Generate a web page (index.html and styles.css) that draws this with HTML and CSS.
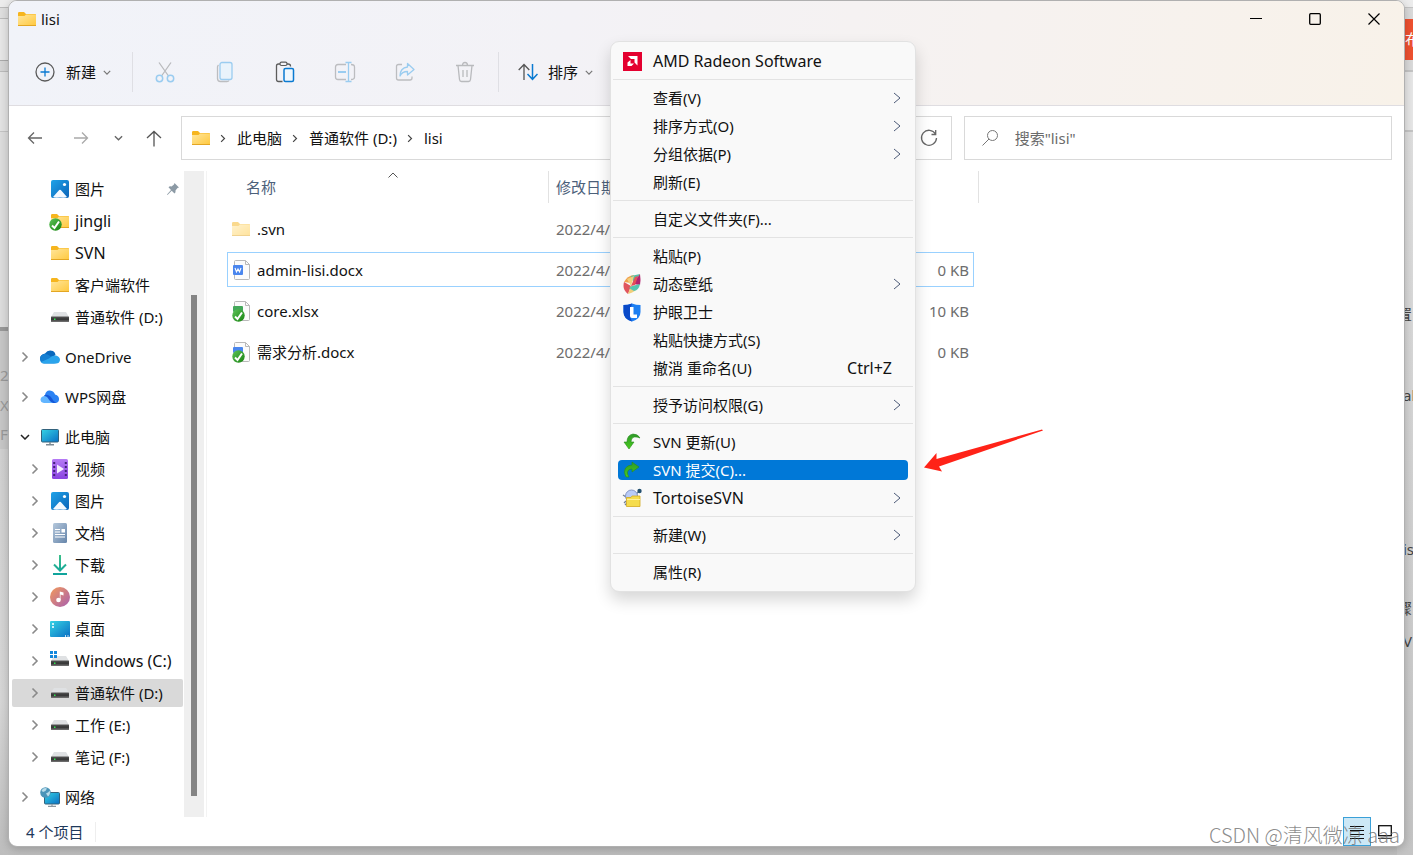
FILE: index.html
```html
<!DOCTYPE html>
<html lang="zh-CN">
<head>
<meta charset="utf-8">
<title>lisi</title>
<link rel="stylesheet" href="styles.css">
</head>
<body class="desktop">
<svg class="defs" width="0" height="0" aria-hidden="true">
  <defs>
    <linearGradient id="gFolder" x1="0" y1="0" x2="1" y2="1"><stop offset="0" stop-color="#ffe69c"/><stop offset="1" stop-color="#ffc83d"/></linearGradient>
    <linearGradient id="gBlue" x1="0" y1="0" x2="1" y2="1"><stop offset="0" stop-color="#1fa3e8"/><stop offset="1" stop-color="#0b63b8"/></linearGradient>
    <linearGradient id="gScreen" x1="0" y1="0" x2="1" y2="1"><stop offset="0" stop-color="#35d3e4"/><stop offset="1" stop-color="#0a6fc4"/></linearGradient>
    <linearGradient id="gVideo" x1="0" y1="0" x2="0" y2="1"><stop offset="0" stop-color="#b57af5"/><stop offset="1" stop-color="#8a44e0"/></linearGradient>
    <linearGradient id="gDoc" x1="0" y1="0" x2="1" y2="1"><stop offset="0" stop-color="#b5c8dc"/><stop offset="1" stop-color="#6685aa"/></linearGradient>
    <linearGradient id="gDown" x1="0" y1="0" x2="0" y2="1"><stop offset="0" stop-color="#3cc08a"/><stop offset="1" stop-color="#0fa39c"/></linearGradient>
    <linearGradient id="gMusic" x1="0" y1="0" x2="1" y2="1"><stop offset="0" stop-color="#f39a5a"/><stop offset="1" stop-color="#a85fb0"/></linearGradient>
    <linearGradient id="gDrive" x1="0" y1="0" x2="0" y2="1"><stop offset="0" stop-color="#585858"/><stop offset=".5" stop-color="#333"/><stop offset="1" stop-color="#777"/></linearGradient>
    <linearGradient id="gGreen" x1="0" y1="0" x2="1" y2="1"><stop offset="0" stop-color="#5fc35a"/><stop offset="1" stop-color="#16830f"/></linearGradient>
    <linearGradient id="gArrow" x1="0" y1="0" x2="0" y2="1"><stop offset="0" stop-color="#2f9a2a"/><stop offset="1" stop-color="#49cc1c"/></linearGradient>
  </defs>
  <symbol id="folder" viewBox="0 0 18 14"><path d="M0 1.200Q0 0 1.200 0H6L8 2H17Q18 2 18 3V7H0z" fill="#f6b51e"/><path d="M0 4H6.500L8 2.500H17Q18 2.500 18 3.500V13Q18 14 17 14H1Q0 14 0 13z" fill="url(#gFolder)"/><path d="M0 13.500H18" stroke="#e3a623"/></symbol>
  <symbol id="check" viewBox="0 0 13 13"><circle cx="6.500" cy="6.500" r="6.200" fill="url(#gGreen)"/><path d="M3 7.500L5.500 10L10 3.500" fill="none" stroke="#fff" stroke-width="2"/></symbol>
  <symbol id="picture" viewBox="0 0 18 18"><rect width="18" height="18" rx="2" fill="url(#gBlue)"/><path d="M2 17L8.200 10Q9 9.300 9.800 10L16 17Q15 18 9 17.500Q3 18 2 17z" fill="#f4f9ff"/><circle cx="13.500" cy="4.500" r="1.600" fill="#fff"/></symbol>
  <symbol id="drive" viewBox="0 0 18 10"><path d="M3 0H15L18 5H0z" fill="#dfe1e3"/><rect y="4.500" width="18" height="5.500" rx=".5" fill="url(#gDrive)"/><rect x="3" y="6.500" width="1.500" height="1.500" fill="#30e650"/></symbol>
  <symbol id="right" viewBox="0 0 8 12"><path d="M1.500 1.500L6 6L1.500 10.500" fill="none" stroke="currentColor" stroke-width="1.600"/></symbol>
  <symbol id="down" viewBox="0 0 10 6"><path d="M1 1L5 5L9 1" fill="none" stroke="currentColor" stroke-width="1.500"/></symbol>
  <symbol id="more" viewBox="0 0 8 12"><path d="M1 1L7 6L1 11" fill="none" stroke="currentColor" stroke-width="1"/></symbol>
  <symbol id="page" viewBox="0 0 17 20"><path d="M1.500 1.500Q1.500 .5 2.500 .5H12.500L16.500 4.500V18.500Q16.500 19.500 15.500 19.500H2.500Q1.500 19.500 1.500 18.500z" fill="#fbfbfb" stroke="#b9b9b9"/><path d="M12.500 .5V4.500H16.500" fill="none" stroke="#b9b9b9"/></symbol>
</svg>

<div class="behind behind-left" aria-hidden="true"><span class="frag f-2">2</span><span class="frag f-x">X</span><span class="frag f-f">F</span></div>
<div class="behind behind-right" aria-hidden="true"><span class="publish">布</span><span class="frag r-1">置</span><span class="frag r-2">al</span><span class="frag r-3">is</span><span class="frag r-4">骤</span><span class="frag r-5">V</span></div>

<main class="window">
  <header class="chrome">
    <div class="titlebar">
      <svg class="i-folder"><use href="#folder"/></svg>
      <h1 class="title">lisi</h1>
      <div class="caption">
        <button class="cap" aria-label="最小化"><svg width="12" height="12"><path d="M0 5.500H12" stroke="#000"/></svg></button>
        <button class="cap" aria-label="最大化"><svg width="12" height="12"><rect x=".7" y=".7" width="10.600" height="10.600" rx="1" fill="none" stroke="#000" stroke-width="1.300"/></svg></button>
        <button class="cap" aria-label="关闭"><svg width="12" height="12"><path d="M.5 .5L11.500 11.500M11.500 .5L.5 11.500" stroke="#000" stroke-width="1.200"/></svg></button>
      </div>
    </div>
    <div class="toolbar">
      <button class="tool"><svg width="20" height="20"><circle cx="10" cy="10" r="9" fill="none" stroke="#5a5a5a" stroke-width="1.300"/><path d="M5.500 10H14.500M10 5.500V14.500" stroke="#0a7ad1" stroke-width="1.300"/></svg><span class="tool-text">新建</span><svg class="chev" width="8" height="5"><use href="#down"/></svg></button>
      <span class="divider divider-a"></span>
      <button class="tool tool-icon" aria-label="剪切"><svg width="20" height="22"><path d="M4 1.500L13.500 15M16 1.500L6.500 15" stroke="#b9babd" stroke-width="1.300"/><g fill="none" stroke="#9accf0" stroke-width="1.500"><circle cx="4.500" cy="17.500" r="3.200"/><circle cx="15.500" cy="17.500" r="3.200"/></g></svg></button>
      <button class="tool tool-icon" aria-label="复制"><svg width="20" height="22"><path d="M3.500 4Q2.500 5 2.500 6V17.500Q2.500 20.500 5.500 20.500H12Q13.500 20.500 14 19.500" fill="none" stroke="#bcbdc0" stroke-width="1.300"/><rect x="5" y="1.500" width="12" height="17" rx="2" fill="#e9f3fb" stroke="#9accf0" stroke-width="1.300"/></svg></button>
      <button class="tool tool-icon" aria-label="粘贴"><svg width="20" height="22"><path d="M7.500 20.500H3.500Q1.500 20.500 1.500 18.500V5Q1.500 3 3.500 3H13Q15.500 3 15.500 5V5.500" fill="none" stroke="#5c5c5c" stroke-width="1.300"/><rect x="5" y="1.200" width="7" height="3.300" rx="1.500" fill="#f3f2f6" stroke="#5c5c5c" stroke-width="1.200"/><rect x="9" y="7.500" width="9.500" height="13" rx="1.500" fill="#f0f7fd" stroke="#0a7ad1" stroke-width="1.500"/></svg></button>
      <button class="tool tool-icon" aria-label="重命名"><svg width="22" height="22"><path d="M12 3.500H4Q1.500 3.500 1.500 6V16Q1.500 18.500 4 18.500H12M17 3.500Q20.500 3.500 20.500 6V16Q20.500 18.500 17 18.500" fill="none" stroke="#bcbdc0" stroke-width="1.300"/><path d="M4 11H12" stroke="#9accf0" stroke-width="2"/><path d="M14.500 1.500V20.500M11.500 1.500H17.500M11.500 20.500H17.500" stroke="#9accf0" stroke-width="1.300"/></svg></button>
      <button class="tool tool-icon" aria-label="共享"><svg width="20" height="20"><path d="M7 2.500H3.500Q1.500 2.500 1.500 4.500V16Q1.500 18 3.500 18H15Q17 18 17 16V14.500" fill="none" stroke="#bcbdc0" stroke-width="1.300"/><path d="M12.500 1.500L19 7.500L12.500 13V9.500Q7 9.500 5 14Q5 6 12.500 5z" fill="none" stroke="#9accf0" stroke-width="1.300" stroke-linejoin="round"/></svg></button>
      <button class="tool tool-icon" aria-label="删除"><svg width="20" height="22"><path d="M1 4.500H19M3 4.500L4.500 18.500Q4.700 20.500 6.500 20.500H13.500Q15.300 20.500 15.500 18.500L17 4.500M7.500 4.500Q7.500 1.500 10 1.500T12.500 4.500M8 9V16M12 9V16" fill="none" stroke="#b9babd" stroke-width="1.300"/></svg></button>
      <span class="divider divider-b"></span>
      <button class="tool"><svg width="20" height="18"><path d="M6 17V2M.7 7L6 1.500L11.300 7" fill="none" stroke="#555" stroke-width="1.300"/><path d="M14.500 1V16M9.500 11L14.500 16.300L19.500 11" fill="none" stroke="#0a7ad1" stroke-width="1.500"/></svg><span class="tool-text tool-sort">排序</span><svg class="chev" width="8" height="5"><use href="#down"/></svg></button>
    </div>
  </header>

  <div class="addressrow">
    <nav class="navs">
      <button class="nav" aria-label="后退"><svg width="16" height="14"><path d="M15 7H1.500M7 1.500L1.500 7L7 12.500" fill="none" stroke="#666" stroke-width="1.300"/></svg></button>
      <button class="nav" aria-label="前进"><svg width="16" height="14"><path d="M1 7H14.500M9 1.500L14.500 7L9 12.500" fill="none" stroke="#a9a9a9" stroke-width="1.300"/></svg></button>
      <button class="nav nav-small" aria-label="最近位置"><svg width="9" height="6"><use href="#down"/></svg></button>
      <button class="nav nav-up" aria-label="向上"><svg width="16" height="17"><path d="M8 16.500V1.500M1 8L8 1.500L15 8" fill="none" stroke="#555" stroke-width="1.300"/></svg></button>
    </nav>
    <div class="address">
      <svg class="i-folder"><use href="#folder"/></svg>
      <svg class="crumb-sep"><use href="#right"/></svg><a class="crumb" href="#pc">此电脑</a>
      <svg class="crumb-sep"><use href="#right"/></svg><a class="crumb" href="#d">普通软件 (D:)</a>
      <svg class="crumb-sep"><use href="#right"/></svg><a class="crumb" href="#lisi">lisi</a>
      <button class="refresh" aria-label="刷新"><svg width="18" height="18"><path d="M15.500 5A7.500 7.500 0 1 0 16.500 9M15.700 1V5.500H11.500" fill="none" stroke="#666" stroke-width="1.300"/></svg></button>
    </div>
    <label class="search"><svg width="18" height="18"><circle cx="11.500" cy="6.500" r="5" fill="none" stroke="#777"/><path d="M8 10L1.500 16.500" stroke="#777"/></svg><input class="search-input" type="text" placeholder='搜索"lisi"' aria-label="搜索"></label>
  </div>

  <div class="body">
    <aside class="sidebar">
      <ul class="tree">
        <li class="node sub"><span class="ico"><svg width="18" height="18"><use href="#picture"/></svg></span>图片<svg class="pin" width="14" height="14"><path d="M8.500 1L13 5.500L11.500 6L9.500 8.500Q10 10.500 8.500 11.500L5.700 8.700L1.500 13L1 12.500L5 8L2.500 5.300Q3.500 4 5.500 4.500L8 2.500z" fill="#8c9aa5"/></svg></li>
        <li class="node sub latin"><span class="ico"><svg class="i-folder"><use href="#folder"/></svg><svg class="badge"><use href="#check"/></svg></span>jingli</li>
        <li class="node sub latin"><span class="ico"><svg class="i-folder"><use href="#folder"/></svg></span>SVN</li>
        <li class="node sub"><span class="ico"><svg class="i-folder"><use href="#folder"/></svg></span>客户端软件</li>
        <li class="node sub"><span class="ico"><svg class="i-drive"><use href="#drive"/></svg></span>普通软件 (D:)</li>
        <li class="node root"><svg class="exp"><use href="#right"/></svg><span class="ico"><svg width="20" height="14"><path d="M5 3.500Q8-1 13 1Q15.500 2.300 15.500 5L10 9L3 12Q0 11 0 8Q.3 4.500 5 3.500z" fill="#0868bd"/><path d="M0 8.500Q.5 4.500 4.500 4Q6.500 3.500 8.500 5L18 11Q17 13.500 14 13.500H4Q0 13 0 8.500z" fill="#147fd2"/><path d="M9 8.500Q12 5 16 5.500Q20 6.500 20 10Q19.500 13.500 16 13.500H4Q2 13.500 1 12z" fill="#2aa4ec"/></svg></span>OneDrive</li>
        <li class="node root"><svg class="exp"><use href="#right"/></svg><span class="ico"><svg width="20" height="14"><path d="M5 5Q6 0 10 .5Q14 1 15 4.500Q19.500 5.500 19 10Q18.500 13 15 13H12L4 5z" fill="#2b82f3"/><path d="M4 13Q.5 12.500 .5 9.500Q1 6 5 6Q9 6 11 9.500L13.500 13z" fill="#62b5ff"/><path d="M5 5Q9 4 12 8.500Q14 12.500 17 12.500L14 13Q11 13 8.500 9Q7 6 4 6z" fill="#1557d8"/></svg></span>WPS网盘</li>
        <li class="node root"><svg class="exp exp-open"><use href="#down"/></svg><span class="ico"><svg width="18" height="17"><rect x=".5" y=".5" width="17" height="12.500" rx="1" fill="url(#gScreen)" stroke="#33627c"/><path d="M9 13V15M5 15.700H13" stroke="#7c8a94" stroke-width="1.500"/></svg></span>此电脑</li>
        <li class="node leaf"><svg class="exp"><use href="#right"/></svg><span class="ico"><svg width="16" height="20"><rect width="16" height="20" rx="1.500" fill="url(#gVideo)"/><path d="M2.200 3V19M13.800 3V19" stroke="#43207a" stroke-width="2" stroke-dasharray="2 2"/><path d="M5 5.500L12 10L5 14.500z" fill="#f5efff"/></svg></span>视频</li>
        <li class="node leaf"><svg class="exp"><use href="#right"/></svg><span class="ico"><svg width="18" height="18"><use href="#picture"/></svg></span>图片</li>
        <li class="node leaf"><svg class="exp"><use href="#right"/></svg><span class="ico"><svg width="14" height="20"><rect width="14" height="20" rx="1.500" fill="url(#gDoc)"/><path d="M2 6.500H7M2 9H7M2 11.500H12M2 14H12" stroke="#fff" stroke-width="1.200"/><rect x="8.500" y="6" width="3.500" height="3.500" fill="#fff"/></svg></span>文档</li>
        <li class="node leaf"><svg class="exp"><use href="#right"/></svg><span class="ico"><svg width="16" height="20"><path d="M8 0V15M2 9.500L8 15.500L14 9.500M1 19H15" fill="none" stroke="url(#gDown)" stroke-width="2"/></svg></span>下载</li>
        <li class="node leaf"><svg class="exp"><use href="#right"/></svg><span class="ico"><svg width="20" height="20"><circle cx="10" cy="10" r="10" fill="url(#gMusic)"/><circle cx="8.500" cy="13" r="2.300" fill="#fff"/><path d="M9.800 13V4.500L13.500 5.500V8.500L10.500 7.500V13z" fill="#fff"/></svg></span>音乐</li>
        <li class="node leaf"><svg class="exp"><use href="#right"/></svg><span class="ico"><svg width="20" height="16"><rect width="20" height="16" rx="1" fill="url(#gScreen)"/><path d="M2 3H4M2 6H4M15 15H16M17.500 15H18.500" stroke="#fff" stroke-width="1.600"/></svg></span>桌面</li>
        <li class="node leaf latin"><svg class="exp"><use href="#right"/></svg><span class="ico"><svg class="i-drive"><use href="#drive"/></svg><svg class="winlogo" width="7" height="7"><path d="M0 0H3V3H0zM4 0H7V3H4zM0 4H3V7H0zM4 4H7V7H4z" fill="#1287dc"/></svg></span>Windows (C:)</li>
        <li class="node leaf current"><svg class="exp"><use href="#right"/></svg><span class="ico"><svg class="i-drive"><use href="#drive"/></svg></span>普通软件 (D:)</li>
        <li class="node leaf"><svg class="exp"><use href="#right"/></svg><span class="ico"><svg class="i-drive"><use href="#drive"/></svg></span>工作 (E:)</li>
        <li class="node leaf"><svg class="exp"><use href="#right"/></svg><span class="ico"><svg class="i-drive"><use href="#drive"/></svg></span>笔记 (F:)</li>
        <li class="node root"><svg class="exp"><use href="#right"/></svg><span class="ico"><svg width="20" height="20"><rect x="4.500" y="5.500" width="15" height="11.500" rx="1" fill="url(#gScreen)" stroke="#33627c"/><path d="M12 17V19M8 19.300H16" stroke="#8b979f" stroke-width="1.200"/><circle cx="5.500" cy="5.500" r="5.300" fill="#4b94b8"/><path d="M1.500 3.500Q4 0 7 1.500Q6 4.500 3 5zM6 6.500Q9 5.500 9.500 3.500Q11 7 8 9.500z" fill="#b9dcea"/></svg></span>网络</li>
      </ul>
      <div class="scrollbar"><div class="thumb"></div></div>
    </aside>

    <section class="files">
      <table class="list">
        <colgroup><col class="c-name"><col class="c-date"><col class="c-size"></colgroup>
        <thead><tr>
          <th><div class="head head-name">名称<svg class="sort" width="10" height="6"><path d="M.5 5.500L5 1L9.500 5.500" fill="none" stroke="#555"/></svg></div></th>
          <th><div class="head">修改日期</div></th>
          <th><div class="head head-last"></div></th>
        </tr></thead>
        <tbody>
          <tr><td><div class="cell name"><span class="fico faded"><svg class="i-folder"><use href="#folder"/></svg></span>.svn</div></td><td><div class="cell date">2022/4/</div></td><td><div class="cell size"></div></td></tr>
          <tr class="focused"><td><div class="cell name"><span class="fico"><svg width="17" height="20"><use href="#page"/><rect y="5" width="10" height="10" rx="1" fill="#4a86ee"/><path d="M2 8L3.500 12L5 9L6.500 12L8 8" fill="none" stroke="#fff" stroke-width="1.100"/></svg></span>admin-lisi.docx</div></td><td><div class="cell date">2022/4/</div></td><td><div class="cell size">0 KB</div></td></tr>
          <tr><td><div class="cell name"><span class="fico"><svg width="17" height="20"><use href="#page"/><rect y="5" width="10" height="6" rx="1" fill="#43a85a"/></svg><svg class="badge"><use href="#check"/></svg></span>core.xlsx</div></td><td><div class="cell date">2022/4/</div></td><td><div class="cell size">10 KB</div></td></tr>
          <tr><td><div class="cell name"><span class="fico"><svg width="17" height="20"><use href="#page"/><rect y="5" width="10" height="6" rx="1" fill="#4a86ee"/></svg><svg class="badge"><use href="#check"/></svg></span>需求分析.docx</div></td><td><div class="cell date">2022/4/</div></td><td><div class="cell size">0 KB</div></td></tr>
        </tbody>
      </table>
    </section>
  </div>

  <footer class="status">
    <span class="count">4 个项目</span>
    <div class="views">
      <button class="view view-on" aria-label="详细信息"><svg width="14" height="14"><path d="M0 1.500H14M0 5.500H14M0 9.500H14M0 13.500H14" stroke="#111"/></svg></button>
      <button class="view" aria-label="大图标"><svg width="14" height="14"><rect x=".7" y=".7" width="12.600" height="10" fill="none" stroke="#111" stroke-width="1.300"/><path d="M0 13.300H14" stroke="#111"/></svg></button>
    </div>
  </footer>

  <div class="menu" role="menu">
    <button class="item latin" role="menuitem"><span class="mico"><svg width="19" height="19"><rect width="19" height="19" fill="#e4002f"/><path d="M5 4H14.500V13.500L11.500 10.500V7H8zM7.500 8V11.500H11L8.500 14H4.500V10.500z" fill="#fff"/></svg></span>AMD Radeon Software</button>
    <hr class="rule">
    <button class="item" role="menuitem">查看(V)<svg class="more"><use href="#more"/></svg></button>
    <button class="item" role="menuitem">排序方式(O)<svg class="more"><use href="#more"/></svg></button>
    <button class="item" role="menuitem">分组依据(P)<svg class="more"><use href="#more"/></svg></button>
    <button class="item" role="menuitem">刷新(E)</button>
    <hr class="rule">
    <button class="item" role="menuitem">自定义文件夹(F)...</button>
    <hr class="rule">
    <button class="item" role="menuitem">粘贴(P)</button>
    <button class="item" role="menuitem"><span class="mico"><svg width="18" height="20"><path d="M1 8Q4 2 11 1L8 9z" fill="#f0a04c"/><path d="M8 2L17 0L11 10z" fill="#57c0a6"/><path d="M17 0Q18 6 17 11L10 10z" fill="#b3246f"/><path d="M1 8L8 12L5 20Q-1 16 1 8z" fill="#e0555d"/><path d="M4 5L11 2L8 12L16 12Q13 18 5 20L8 12z" fill="#f1cf7c"/><path d="M9 12L17 10Q16 16 11 17L6 14z" fill="#55c5b0"/><path d="M12 3L15 2L12 11L8 12z" fill="#e74d57"/></svg></span>动态壁纸<svg class="more"><use href="#more"/></svg></button>
    <button class="item" role="menuitem"><span class="mico"><svg width="18" height="19"><path d="M9 .5Q13 2 17.500 2V9Q17.500 16 9 18.500Q.5 16 .5 9V2Q5 2 9 .5z" fill="#1d7ff2"/><path d="M9 .5Q5 2 .5 2V9Q.5 16 9 18.500Q5 12 9 .5z" fill="#0949c8"/><path d="M7 4H10.500V11.500H14V15H9Q7 15 7 13z" fill="#fff"/></svg></span>护眼卫士</button>
    <button class="item" role="menuitem">粘贴快捷方式(S)</button>
    <button class="item" role="menuitem">撤消 重命名(U)<span class="shortcut latin">Ctrl+Z</span></button>
    <hr class="rule">
    <button class="item" role="menuitem">授予访问权限(G)<svg class="more"><use href="#more"/></svg></button>
    <hr class="rule">
    <button class="item" role="menuitem"><span class="mico"><svg width="18" height="18"><path d="M17 5Q15 1 10 1Q4 2 4 9H1L6 16L11 9H8Q8 5 11 4Q14 3.500 17 5z" fill="url(#gArrow)" stroke="#268b1c" stroke-width=".6"/></svg></span>SVN 更新(U)</button>
    <button class="item chosen" role="menuitem"><span class="mico"><svg width="18" height="18"><path d="M3 16Q0 11 2.500 7Q5 4 9 4V1L16 6L9 11V8Q5 8 4.500 11Q4 13 6 16z" fill="url(#gArrow)" stroke="#268b1c" stroke-width=".6"/></svg></span>SVN 提交(C)...</button>
    <button class="item latin" role="menuitem"><span class="mico"><svg width="20" height="20"><path d="M1 7L4 9M2 15L4 13M3 17L5 15M16 4L14 7" stroke="#728093" stroke-width="1.300"/><circle cx="9.500" cy="8" r="6" fill="#b9cbf7" stroke="#8395c5"/><circle cx="17.500" cy="3" r="2.200" fill="#245070"/><path d="M4.500 9.500H9L10 8H18V18.500H4.500z" fill="#f5dc4c" stroke="#d3a920" stroke-width=".8"/><path d="M5 11.500H18" stroke="#fff09a"/></svg></span>TortoiseSVN<svg class="more"><use href="#more"/></svg></button>
    <hr class="rule">
    <button class="item" role="menuitem">新建(W)<svg class="more"><use href="#more"/></svg></button>
    <hr class="rule">
    <button class="item" role="menuitem">属性(R)</button>
  </div>

  <svg class="pointer" width="122" height="46" aria-hidden="true"><path d="M1 39.500L13.500 25L13.500 31L119 1.500L120 2.500L16 38.500L19 43.500z" fill="#ff2318"/></svg>
  <p class="watermark">CSDN @清风微凉 aaa</p>
</main>
</body>
</html>
```
FILE: styles.css
```css
* { box-sizing: border-box; }

.desktop {
  position: relative;
  display: flex;
  height: 100vh;
  margin: 0;
  padding: 0 8px 8px;
  overflow: hidden;
  background: linear-gradient(#e9e9e9, #d8d8d8 50%, #bdbdbd);
  font: 15px/20px "Noto Sans", "Noto Sans CJK SC", sans-serif;
  color: #111;
}
.defs { position: absolute; }

button {
  margin: 0;
  padding: 0;
  border: 0;
  background: none;
  font: inherit;
  color: inherit;
}
svg { flex: none; display: block; }

/* Names written only in Latin letters */
.latin { font-size: 16px; }

/* Pages showing at the sides of the window */
.behind {
  position: absolute;
  top: 0;
  bottom: 0;
  width: 16px;
  overflow: hidden;
}
.behind-left {
  left: 0;
  background: linear-gradient(#ececec 0 7px, #bbb 7px 8px, #dedede 8px 18px, #bbb 18px 19px, #e6e6e6 19px 60px, #aaa 60px 61px, #d5d5d5 61px 71px, #bbb 71px 72px, #e2e2e2 72px 131px, #c4c4c4 131px 132px, #dcdcdc 132px 327px, #989898 327px 331px, #c6c6c6 331px 449px, #d0d0d0 449px, #d6d6d6 700px, #bdbdbd);
}
.behind-right {
  right: 0;
  background: linear-gradient(#ececec 0 7px, #c4c4c4 7px 8px, #dadada 8px 70px, #c4c4c4 70px 72px, #e6e6e6 72px 130px, #c4c4c4 130px 132px, #dedede 132px, #c4c4c4);
}
.frag { position: absolute; left: 6px; color: #444; }
.behind-left .frag { left: 0; color: #999; }
.f-2 { top: 365px; }
.f-x { top: 395px; }
.f-f { top: 424px; }
.publish {
  position: absolute;
  top: 19px;
  right: 0;
  width: 8px;
  height: 41px;
  overflow: hidden;
  background: #ee5130;
  line-height: 41px;
  color: #fff;
}
.behind-right .r-1, .behind-right .r-4 { left: 0; }
.r-1 { top: 304px; }
.r-2 { top: 385px; }
.r-3 { top: 539px; }
.r-4 { top: 598px; }
.r-5 { top: 631px; }

.window {
  position: relative;
  flex: 1;
  display: flex;
  flex-direction: column;
  min-width: 0;
  border: 1px solid #b0b0b0;
  border-radius: 9px;
  background: #fff;
  box-shadow: 0 2px 8px rgba(0, 0, 0, .2);
}

.chrome {
  border-bottom: 1px solid #dfdde1;
  border-radius: 8px 8px 0 0;
  background: linear-gradient(100deg, #f1f3f9, #f3f2f6 40%, #f6f2f0 70%, #f8f2e9);
}
.titlebar {
  display: flex;
  align-items: center;
  gap: 5px;
  height: 36px;
  padding: 0 1px 0 9px;
}
.i-folder { width: 18px; height: 14px; }
.i-drive { width: 18px; height: 10px; }
.title { margin: 0; font: inherit; }
.caption { display: flex; margin-left: auto; }
.cap {
  display: grid;
  place-items: center;
  width: 59px;
  height: 36px;
}

.toolbar {
  display: flex;
  align-items: center;
  height: 68px;
  padding: 2px 0 0 26px;
}
.tool { display: flex; align-items: center; }
.tool-icon { justify-content: center; width: 60px; height: 40px; }
.tool-text { margin: 0 7px 0 11px; }
.tool-sort { margin-left: 10px; }
.chev { color: #777; }
.divider { width: 1px; height: 40px; background: #dfdfe4; }
.divider-a { margin: 0 2px 0 21px; }
.divider-b { margin: 0 19px 0 3px; }

.addressrow {
  display: grid;
  grid-template-columns: 172px minmax(0, 7fr) minmax(0, 4fr);
  align-items: center;
  height: 65px;
  padding: 0 12px 1px 0;
}
.navs { display: flex; padding-left: 3px; }
.nav {
  display: grid;
  place-items: center;
  width: 46px;
  height: 40px;
  color: #666;
}
.nav-small { width: 28px; }
.nav-up { width: 44px; }
.address, .search {
  display: flex;
  align-items: center;
  min-width: 0;
  height: 44px;
  border: 1px solid #d9d9d9;
}
.address { padding: 0 13px 0 10px; }
.crumb-sep { width: 6px; height: 9px; margin: 0 11px 0 10px; color: #444; }
.crumb { color: #111; text-decoration: none; }
.refresh { margin-left: auto; }
.search { gap: 16px; margin-left: 12px; padding: 0 16px; }
.search-input {
  flex: 1;
  min-width: 0;
  padding: 0;
  border: 0;
  outline: 0;
  background: none;
  font: inherit;
}
.search-input::placeholder { color: #6b6b6b; opacity: 1; }

.body { flex: 1; display: flex; min-height: 0; }

.sidebar {
  flex: none;
  display: flex;
  width: 198px;
  padding-right: 2px;
  border-right: 1px solid #f3f3f3;
}
.tree {
  flex: 1;
  min-width: 0;
  margin: 0;
  padding: 2px 1px 0 3px;
  list-style: none;
  white-space: nowrap;
}
.node {
  display: flex;
  align-items: center;
  height: 28px;
  margin: 2px 0 4px;
  border-radius: 2px;
}
.root { margin: 12px 0; padding-left: 9px; }
.root + .leaf { margin-top: -8px; }
.leaf { padding-left: 19px; }
.sub { padding-left: 37px; }
.current { background: #d9d9d9; }
.exp { width: 8px; height: 12px; margin-right: 10px; color: #8a8a8a; }
.exp-open { width: 10px; height: 6px; margin: 0 9px 0 -1px; color: #222; }
.ico {
  position: relative;
  flex: none;
  display: grid;
  place-items: center;
  width: 22px;
  height: 20px;
  margin-right: 4px;
}
.badge {
  position: absolute;
  left: 0;
  bottom: 0;
  width: 13px;
  height: 13px;
}
.winlogo { position: absolute; left: 1px; top: 0; }
.pin { margin: 0 3px 0 auto; }
.scrollbar { flex: none; width: 20px; padding: 124px 7px 21px; background: #efefef; }
.thumb { height: 100%; background: #848484; }

.files { flex: 1; min-width: 0; padding-left: 20px; }
.list {
  width: 752px;
  table-layout: fixed;
  border-collapse: collapse;
}
.c-name { width: 322px; }
.c-date { width: 230px; }
.c-size { width: 200px; }
th, td { padding: 0; font-weight: 400; text-align: left; }
th { height: 37px; vertical-align: top; color: #4c607a; }
td { height: 41px; }
.head {
  position: relative;
  height: 32px;
  padding-left: 7px;
  border-right: 1px solid #e2e2e2;
  line-height: 32px;
}
.head-name { padding-left: 19px; }
th:nth-child(2) .head { border-right: 0; }
.sort { position: absolute; left: 161px; top: 1px; }
.cell {
  display: flex;
  align-items: center;
  height: 35px;
  border: 0 solid transparent;
  border-width: 1px 0;
}
.name { gap: 7px; padding-left: 4px; border-left-width: 1px; }
.date { padding-left: 7px; color: #6d6d6d; }
.size {
  justify-content: flex-end;
  margin-right: 5px;
  padding-right: 4px;
  border-right-width: 1px;
  color: #6d6d6d;
}
.focused .cell { border-color: #99d1ff; }
.fico {
  position: relative;
  display: grid;
  place-items: center;
  width: 18px;
  height: 22px;
}
.faded { opacity: .5; }

.status {
  display: flex;
  align-items: center;
  height: 29px;
  color: #1e395b;
}
.count { padding: 0 12px 0 17px; border-right: 1px solid #eee; }
.views { display: flex; margin-left: auto; padding-right: 5px; }
.view { display: grid; place-items: center; width: 28px; height: 29px; }
.view-on { border: 1px solid #3aa0d8; background: #cce8f6; }

.menu {
  position: absolute;
  left: 601px;
  top: 40px;
  display: flex;
  flex-direction: column;
  width: 306px;
  padding: 5px 2px;
  border: 1px solid #e2e2e2;
  border-radius: 9px;
  background: #f9f9f9;
  box-shadow: 0 8px 16px rgba(0, 0, 0, .16);
}
.item {
  position: relative;
  display: flex;
  align-items: center;
  height: 20px;
  margin: 4px 5px;
  padding: 0 7px 0 35px;
  border-radius: 4px;
  white-space: nowrap;
}
.chosen { background: #0078d7; color: #fff; }
.mico {
  position: absolute;
  left: 4px;
  top: 0;
  display: grid;
  place-items: center;
  width: 20px;
  height: 20px;
}
.more { width: 8px; height: 12px; margin-left: auto; color: #4d5b78; }
.shortcut { margin-left: auto; padding-right: 9px; }
.rule { width: 100%; height: 1px; margin: 4px 0; border: 0; background: #e3e3e3; }

.pointer { position: absolute; left: 914px; top: 427px; }
.watermark {
  position: absolute;
  right: 4px;
  bottom: -2px;
  margin: 0;
  font: 300 20px/26px "Noto Sans CJK SC", sans-serif;
  color: rgba(110, 110, 110, .8);
}
```
